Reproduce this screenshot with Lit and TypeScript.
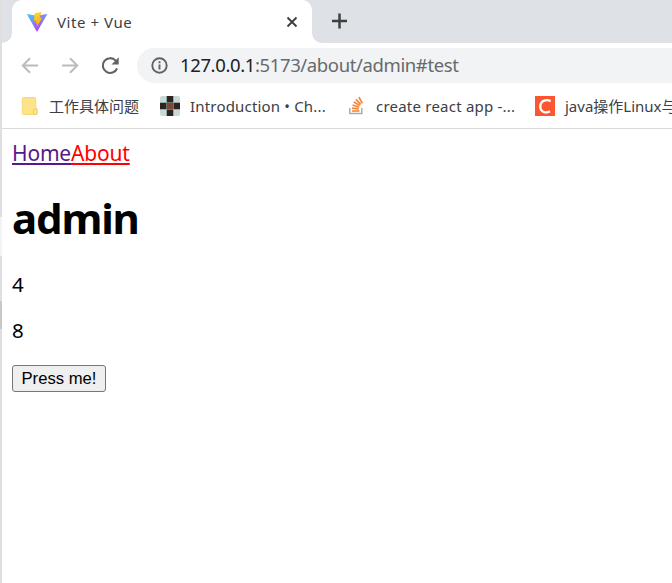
import { LitElement, html, css, svg } from "lit";
import { customElement } from "lit/decorators.js";

const rays = [[6.5, 12.2, 12.8, 12.8], [7, 9, 13.2, 11.2], [8.2, 6, 13.8, 9.6], [10.4, 3.4, 14.8, 8.4], [13.4, 1.2, 16.4, 7.2]];

const viteIcon = html`<svg class="vite" width="20" height="20" viewBox="0 0 20 20">
  <defs>
    <linearGradient id="body" x1="0" y1="0" x2=".65" y2="1"><stop offset="0" stop-color="#41d1ff"/><stop offset="1" stop-color="#bd34fe"/></linearGradient>
    <linearGradient id="bolt" x1=".3" y1="0" x2=".6" y2="1"><stop offset="0" stop-color="#ffd52c"/><stop offset="1" stop-color="#ffa800"/></linearGradient>
  </defs>
  <path d="M.5 2 10 3.700 19.500 2Q20.200 2 19.800 2.700L10.500 19.200Q10 20 9.500 19.200L.2 2.700Q-.1 2 .5 2Z" fill="url(#body)"/>
  <path d="M14.400 0 7.600 1.300 7 9 9.300 8.600 8.600 11.500 10.500 11 9.700 15.200 15.400 5.500 12.800 6Z" fill="url(#bolt)"/>
</svg>`;

@customElement("app-root")
export class AppRoot extends LitElement {
  static styles = css`
    :host { display: flex; height: 583px; overflow: hidden; background: #fff; font-family: "Noto Sans", "Noto Sans CJK SC", sans-serif; white-space: nowrap; color: #000; }
    svg { display: block; flex: none; }
    .edge { flex: none; width: 2px; background: linear-gradient(#dfdfe0 0 217px, #f3f3f3 217px 256px, #dfdfdf 256px 301px, #c8c8c8 301px 329px, #dfdfe1 329px); }
    .window { flex: 1; min-width: 0; display: flex; flex-direction: column; }
    .tabs { display: flex; height: 43px; background: #dee1e6; flex: none; }
    .curve { width: 10px; background: #fff; flex: none; }
    .curve i { display: block; height: 43px; background: #dee1e6; }
    .curve.left i { border-bottom-right-radius: 10px; }
    .curve.right { flex: 1; }
    .curve.right i { border-bottom-left-radius: 10px; }
    .tab { box-sizing: border-box; width: 300px; background: #fff; border-radius: 10px 10px 0 0; display: flex; align-items: center; padding: 0 14px 0 15px; }
    .title { flex: 1; margin-left: 10px; font-size: 15px; color: #3c4043; letter-spacing: .55px; line-height: 24px; }
    .new { padding: 13px 0 0 19.500px; }
    .toolbar { display: flex; align-items: center; height: 45px; flex: none; padding-left: 17.500px; }
    .nav { margin-right: 20px; }
    .nav.reload { margin-right: 16.500px; }
    .address { flex: 1; min-width: 0; height: 35px; border-radius: 18px 0 0 18px; background: #f1f3f4; display: flex; align-items: center; padding-left: 14px; font-size: 18.500px; color: #666a6d; }
    .url { margin-left: 12px; letter-spacing: -.38px; line-height: 26px; padding-bottom: 1px; }
    .url b { color: #202124; font-weight: 400; }
    .bookmarks { display: flex; flex: none; align-items: center; border-bottom: 1px solid #d9dadc; padding: 0 0 4px 18px; overflow: hidden; box-sizing: border-box; height: 41px; }
    .mark { display: flex; align-items: center; flex: none; font-size: 15px; color: #3c4043; }
    .mark span { margin-left: 10px; line-height: 22px; }
    .mark.m1 span { margin-left: 9px; }
    .m1 { width: 140px; } .m2 { width: 187px; } .m3 { width: 188px; } .m4 { width: 160px; }
    .m2 span { letter-spacing: .18px; }
    .m3 span { letter-spacing: .22px; }
    .page { padding: 11px 10px; font-size: 20.500px; }
    nav { line-height: 27px; font-size: 21px; letter-spacing: -.18px; }
    a { text-decoration: underline; text-decoration-thickness: 2px; text-underline-offset: 2px; text-decoration-skip-ink: none; color: #551a8b; }
    a.active { color: #f00; }
    h1 { font-size: 42px; line-height: 56px; margin: 23px 0 25px; font-weight: 700; letter-spacing: -1.150px; }
    p { margin: 0 0 19px; line-height: 27px; }
    p:last-of-type { margin-bottom: 21px; }
    button { display: block; box-sizing: border-box; width: 94px; height: 27px; border: 1px solid #767676; border-radius: 3px; background: #efefef; font: 16.67px "Liberation Sans", sans-serif; padding: 0; color: #000; }
  `;

  render() {
    return html`
      <div class="edge"></div>
      <div class="window">
        <div class="tabs">
          <div class="curve left"><i></i></div>
          <div class="tab">
            ${viteIcon}<span class="title">Vite + Vue</span>
            <svg width="12" height="12" viewBox="0 0 12 12"><path d="m1.500 1.500 9 9m0-9-9 9" stroke="#3c4043" stroke-width="1.900"/></svg>
          </div>
          <div class="curve right"><i><svg class="new" width="16" height="16" viewBox="0 0 16 16"><path d="M8 .5v15M.5 8h15" stroke="#3c4043" stroke-width="2.500"/></svg></i></div>
        </div>
        <div class="toolbar">
          <svg class="nav" width="20" height="20" viewBox="0 0 20 20" fill="none" stroke="#babcbe" stroke-width="2"><path d="M18 9.500H3.500M10 2.200 2.800 9.500l7.200 7.300"/></svg>
          <svg class="nav" width="20" height="20" viewBox="0 0 20 20" fill="none" stroke="#babcbe" stroke-width="2"><path d="M2 9.500h14.500M10 2.200 17.200 9.500l-7.200 7.300"/></svg>
          <svg class="nav reload" width="21" height="20" viewBox="0 0 21 20"><path d="M17.100 12.300A7.400 7.400 0 1 1 15.700 4.600" fill="none" stroke="#5f6368" stroke-width="2.100"/><path d="M18.700 1.300v7.200h-7.200Z" fill="#5f6368"/></svg>
          <div class="address">
            <svg width="17" height="17" viewBox="0 0 17 17"><circle cx="8.500" cy="8.500" r="7.200" fill="none" stroke="#5f6368" stroke-width="1.900"/><path d="M8.500 7.500v5M8.500 4.300v2" stroke="#5f6368" stroke-width="1.900"/></svg>
            <span class="url"><b>127.0.0.1</b>:5173/about/admin#test</span>
          </div>
        </div>
        <div class="bookmarks">
          <div class="mark m1">
            <svg width="20" height="20" viewBox="0 0 20 20"><path d="M3.500 1.500h11q1.200 0 1.200 1.200v9.300l1.300 1v4.300q0 1.200-1.200 1.200H3.500q-1.200 0-1.200-1.200V2.700q0-1.200 1.200-1.200Z" fill="#ffe38b" stroke="#f6d873"/><path d="M13.500 18v-3.500q0-1.500 1.500-1.500h2v4q0 1.500-1.500 1.500Z" fill="#ffe794" stroke="#eecb59"/></svg>
            <span>工作具体问题</span>
          </div>
          <div class="mark m2">
            <svg width="20" height="20" viewBox="0 0 20 20"><rect width="20" height="20" rx="2" fill="#cbd9d4"/><path d="M7 0h6v20H7ZM0 7h20v6H0Z" fill="#2c2423"/><path d="M7 7h6v6H7Z" fill="#87452f"/><path d="M6.500 0v20M13.500 0v20M0 6.500h20M0 13.500h20" stroke="#819994" stroke-width=".7"/></svg>
            <span>Introduction • Ch...</span>
          </div>
          <div class="mark m3">
            <svg width="19" height="20" viewBox="0 0 19 20"><path d="M2.800 12v5.500h12V12" fill="none" stroke="#a9adb0" stroke-width="1.500"/><path d="M5 15h7.500" stroke="#f4873b" stroke-width="1.600"/>${rays.map(([a, b, c, d]) => svg`<path d="M${a - 1.5} ${b}L${c - 1} ${d}" stroke="#f4873b" stroke-width="1.700"/>`)}</svg>
            <span>create react app -...</span>
          </div>
          <div class="mark m4">
            <svg width="20" height="20" viewBox="0 0 20 20"><path d="M0 0h20v20H0Z" fill="#fc5531"/><path d="M15.600 5.100C12 3.300 5.500 4 5.300 10.400c-.1 6.200 6 7 9.700 4.900" fill="none" stroke="#fff" stroke-width="2.300"/></svg>
            <span>java操作Linux与</span>
          </div>
        </div>
        <div class="page">
          <nav><a>Home</a><a class="active">About</a></nav>
          <h1>admin</h1>
          <p>4</p>
          <p>8</p>
          <button>Press me!</button>
        </div>
      </div>`;
  }
}
